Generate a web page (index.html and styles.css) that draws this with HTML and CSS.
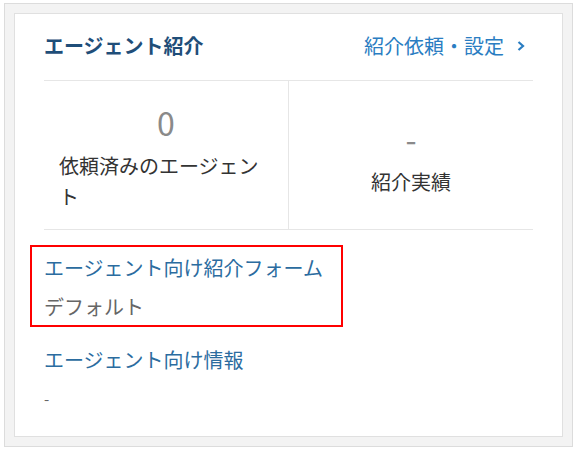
FILE: index.html
```html
<!doctype html>
<html lang="ja">
<head>
    <meta charset="UTF-8">
    <title>エージェント紹介</title>
    <link rel="stylesheet" href="styles.css">
</head>
<body>
    <div class="frame">
        <section class="card">
            <header class="card-head">
                <h2 class="card-title">エージェント紹介</h2>
                <a class="head-link" href="#">紹介依頼・設定
                    <svg class="chev" width="10" height="12" viewBox="0 0 10 12"><polyline points="2.5,2 7,6 2.5,10" fill="none" stroke="currentColor" stroke-width="2.2"/></svg>
                </a>
            </header>
            <div class="stats">
                <div class="stat">
                    <div class="stat-num">0</div>
                    <div class="stat-label">依頼済みのエージェント</div>
                </div>
                <div class="stat">
                    <div class="stat-num">-</div>
                    <div class="stat-label">紹介実績</div>
                </div>
            </div>
            <div class="items">
                <div class="item item-marked">
                    <a class="item-title" href="#">エージェント向け紹介フォーム</a>
                    <div class="item-value">デフォルト</div>
                    <span class="mark"></span>
                </div>
                <div class="item">
                    <a class="item-title" href="#">エージェント向け情報</a>
                    <div class="item-value item-empty">-</div>
                </div>
            </div>
        </section>
    </div>
</body>
</html>
```

FILE: styles.css
```css
*{
    margin: 0;
    padding: 0;
    box-sizing: border-box;
}
html,body{
    background: #fff;
}
body{
    padding: 3px 7px 0 4px;
    font: 20px/31px Meiryo, "Noto Sans CJK JP", "Noto Sans", sans-serif;
    color: #333;
}
a{
    text-decoration: none;
}
.frame{
    width: 569px;
    height: 444px;
    border: 1px solid #dcdcdc;
    background: #f3f3f3;
    padding: 9px;
}
.card{
    height: 424px;
    background: #fff;
    border: 1px solid #e0e0e0;
    padding: 0 29px 22px;
}
.card-head{
    display: flex;
    justify-content: space-between;
    align-items: center;
    padding: 17px 0 19px;
    border-bottom: 1px solid #e6e6e6;
}
.card-title{
    font-size: 20px;
    line-height: 30px;
    font-weight: bold;
    color: #1f4e79;
}
.head-link{
    display: flex;
    align-items: center;
    line-height: 30px;
    color: #2a7dc2;
    padding-right: 7px;
}
.chev{
    margin-left: 12px;
}
.stats{
    display: flex;
    border-bottom: 1px solid #e6e6e6;
}
.stat{
    flex: 1;
    display: flex;
    flex-direction: column;
    justify-content: center;
    align-items: center;
    padding: 17px 15px;
}
.stat + .stat{
    border-left: 1px solid #e6e6e6;
}
.stat-num{
    font-size: 32px;
    line-height: 48px;
    color: #8a8a8a;
    margin-bottom: 4px;
}
.stat-label{
    text-align: left;
}
.items{
    padding-top: 22px;
}
.item{
    position: relative;
}
.item + .item{
    margin-top: 22px;
}
.item-title{
    display: block;
    color: #2b6c9f;
}
.item-value{
    margin-top: 8px;
    color: #666;
}
.item-empty{
    font-size: 15px;
}
.mark{
    position: absolute;
    left: -14px;
    top: -7px;
    width: 313px;
    height: 82px;
    border: 2px solid #f00;
}
```
